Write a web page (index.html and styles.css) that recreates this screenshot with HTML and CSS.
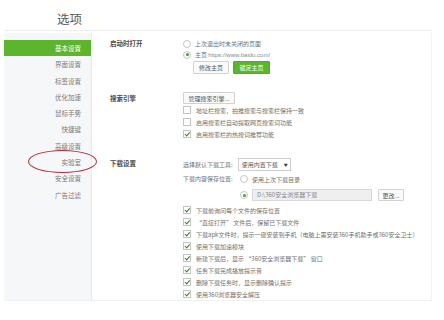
FILE: index.html
```html
<!DOCTYPE html>
<html>
<head>
    <meta charset="utf-8">
    <title>选项</title>
    <link rel="stylesheet" href="styles.css">
</head>
<body>
    <div class="page">
        <div class="header">
            <h1 class="title">选项</h1>
        </div>

        <div class="panel">
            <div class="sidebar">
                <div class="nav-item active">基本设置</div>
                <div class="nav-item">界面设置</div>
                <div class="nav-item">标签设置</div>
                <div class="nav-item">优化加速</div>
                <div class="nav-item">鼠标手势</div>
                <div class="nav-item">快捷键</div>
                <div class="nav-item">高级设置</div>
                <div class="nav-item">实验室</div>
                <div class="nav-item">安全设置</div>
                <div class="nav-item">广告过滤</div>
                <div class="mark"></div>
            </div>

            <div class="main">
                <!-- 启动时打开 -->
                <div class="section first">
                    <div class="label">启动时打开</div>
                    <div class="content">
                        <div class="row"><span class="radio"></span>上次退出时未关闭的页面</div>
                        <div class="row"><span class="radio on"></span>主页&nbsp; <span class="url">https://www.baidu.com/</span></div>
                        <div class="buttons">
                            <button class="btn">修改主页</button>
                            <button class="btn green">锁定主页</button>
                        </div>
                    </div>
                </div>

                <!-- 搜索引擎 -->
                <div class="section">
                    <div class="label tall">搜索引擎</div>
                    <div class="content">
                        <button class="btn wide">管理搜索引擎...</button>
                        <div class="check-row"><span class="check"></span>地址栏搜索，拍推搜索与搜索栏保持一致</div>
                        <div class="check-row"><span class="check"></span>启用搜索栏自动提取网页搜索词功能</div>
                        <div class="check-row"><span class="check on"></span>启用搜索栏的热搜词推荐功能</div>
                    </div>
                </div>

                <!-- 下载设置 -->
                <div class="section">
                    <div class="label select-h">下载设置</div>
                    <div class="content">
                        <div class="tool-row">
                            选择默认下载工具:
                            <span class="select">使用内置下载 <span class="arrow">▼</span></span>
                        </div>
                        <div class="save-row">
                            <span class="save-label">下载内容保存位置:</span>
                            <div class="save-options">
                                <div class="row"><span class="radio"></span>使用上次下载目录</div>
                                <div class="path-row">
                                    <span class="radio on"></span>
                                    <span class="path">D:\360安全浏览器下载</span>
                                    <button class="btn change">更改...</button>
                                </div>
                            </div>
                        </div>
                        <div class="check-list">
                            <div class="check-row"><span class="check on"></span>下载前询问每个文件的保存位置</div>
                            <div class="check-row"><span class="check on"></span>“直接打开” 文件后，保留已下载文件</div>
                            <div class="check-row"><span class="check on"></span>下载apk文件时，提示一键安装到手机（电脑上需安装360手机助手或360安全卫士）</div>
                            <div class="check-row"><span class="check on"></span>使用下载加速模块</div>
                            <div class="check-row"><span class="check on"></span>新建下载后，显示 “360安全浏览器下载” 窗口</div>
                            <div class="check-row"><span class="check on"></span>任务下载完成播放提示音</div>
                            <div class="check-row"><span class="check on"></span>删除下载任务时，显示删除确认提示</div>
                            <div class="check-row"><span class="check on"></span>使用360浏览器安全解压</div>
                        </div>
                    </div>
                </div>
            </div>
        </div>
    </div>
</body>
</html>
```

FILE: styles.css
```css
body {
    margin: 0;
    background: #fff;
    font-family: "Noto Sans CJK SC", "Liberation Sans", sans-serif;
    color: #707070;
}
.page {
    width: 428px;
    margin-left: 4px;
}
.header {
    height: 30px;
    border-bottom: 1px solid #eceef0;
    display: flex;
    align-items: flex-end;
}
.title {
    margin: 0 0 3px 53px;
    font-size: 12.5px;
    line-height: 16px;
    font-weight: normal;
    color: #5a5a5a;
}
.panel {
    display: flex;
    margin-top: 2px;
    height: 267px;
    border-bottom: 1px solid #f0f0f0;
    border-right: 1px solid #f3f3f3;
}
.sidebar {
    position: relative;
    width: 87px;
    padding-top: 7px;
    background: #f6f7f9;
    border-right: 1px solid #e8e9eb;
}
.nav-item {
    height: 16.3px;
    line-height: 16.3px;
    padding-right: 10px;
    text-align: right;
    font-size: 6.5px;
    color: #7a7a7a;
}
.nav-item.active {
    background: #5cb52c;
    color: #fff;
}
.mark {
    position: absolute;
    left: 24px;
    top: 117px;
    width: 67px;
    height: 21px;
    border: 1.5px solid #b52a33;
    border-radius: 50%;
}
.main {
    flex: 1;
    padding: 5px 0 0 18px;
    font-size: 6px;
}
.section {
    display: grid;
    grid-template-columns: 73px 1fr;
    margin-top: 18px;
}
.section.first {
    margin-top: 0;
}
.label {
    line-height: 11px;
    font-size: 6.5px;
    font-weight: bold;
    color: #4a4a4a;
}
.label.tall {
    line-height: 12px;
}
.label.select-h {
    line-height: 11px;
}
.row {
    height: 11px;
    display: flex;
    align-items: center;
    white-space: nowrap;
}
.url {
    font-family: "Liberation Sans", sans-serif;
    font-size: 6px;
    color: #888;
}
.radio {
    width: 6px;
    height: 6px;
    border: 1px solid #c4c4c4;
    border-radius: 50%;
    margin-right: 4px;
    background: #fff;
    flex: none;
    position: relative;
}
.radio.on::after {
    content: "";
    position: absolute;
    left: 1.5px;
    top: 1.5px;
    width: 3px;
    height: 3px;
    border-radius: 50%;
    background: #4e9a2a;
}
.buttons {
    display: flex;
    gap: 4px;
    margin: 1px 0 0 10px;
}
.btn {
    height: 13px;
    padding: 0;
    white-space: nowrap;
    font-family: inherit;
    font-size: 6px;
    color: #555;
    background: #fafafa;
    border: 1px solid #d2d2d2;
    border-radius: 1px;
}
.buttons .btn {
    width: 36px;
}
.btn.green {
    width: 37px;
    background: #5cb52c;
    border-color: #55a828;
    color: #fff;
}
.btn.wide {
    width: 52px;
    height: 12px;
    display: block;
}
.check-row {
    height: 12px;
    display: flex;
    align-items: center;
    white-space: nowrap;
}
.check {
    width: 6px;
    height: 6px;
    border: 1px solid #c4c4c4;
    background: #fff;
    margin-right: 5px;
    flex: none;
    position: relative;
}
.check.on::after {
    content: "";
    position: absolute;
    left: 2px;
    top: 0;
    width: 1.5px;
    height: 3.5px;
    border: solid #3d7a28;
    border-width: 0 1px 1px 0;
    transform: rotate(40deg);
}
.tool-row {
    height: 13px;
    display: flex;
    align-items: center;
    gap: 5px;
}
.select {
    height: 11px;
    width: 46px;
    display: flex;
    align-items: center;
    justify-content: space-between;
    padding: 0 2px 0 3px;
    border: 1px solid #cfcfcf;
    background: #fff;
    color: #555;
}
.arrow {
    font-size: 4px;
    color: #333;
}
.save-row {
    display: flex;
    margin-top: 1px;
}
.save-label {
    width: 57px;
    height: 14px;
    line-height: 14px;
}
.save-options .row {
    height: 14px;
}
.path-row {
    height: 12px;
    margin-top: 3px;
    display: flex;
    align-items: center;
}
.path {
    width: 114px;
    height: 10px;
    line-height: 10px;
    padding-left: 4px;
    background: #eeefee;
    border: 1px solid #d8d8d8;
    color: #888;
}
.btn.change {
    width: 26px;
    height: 12px;
    margin-left: 6px;
}
.check-list {
    margin-top: 3px;
}
```
